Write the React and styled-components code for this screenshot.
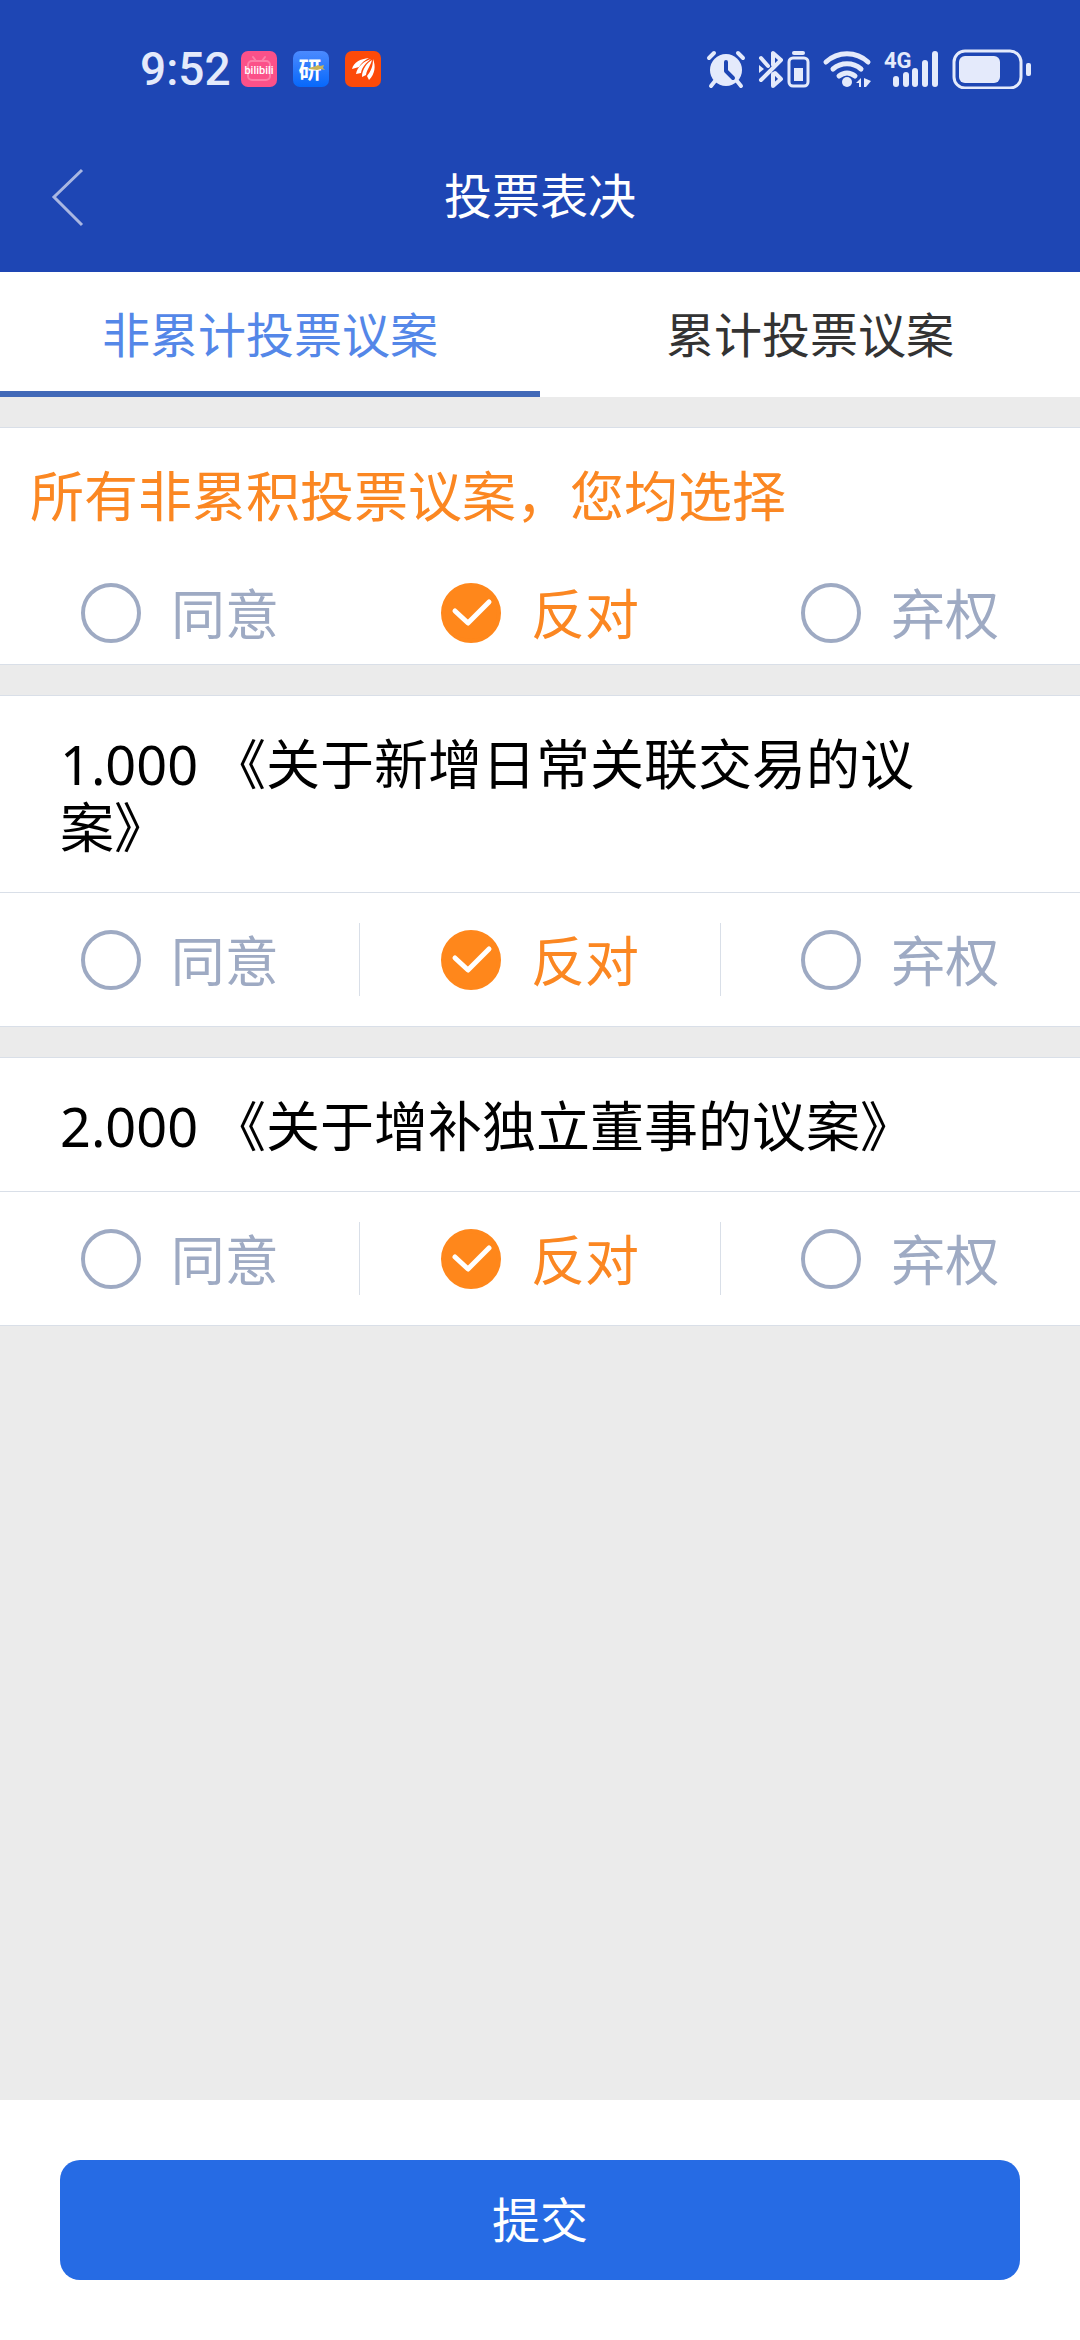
import React, { useState } from 'react'
import styled, { createGlobalStyle } from 'styled-components'

const GlobalStyle = createGlobalStyle`
  * {
    box-sizing: border-box;
  }

  body {
    margin: 0;
    background-color: #ebebeb;
    font-family: "Noto Sans", "Noto Sans CJK SC", sans-serif;
    text-spacing-trim: space-all;
  }

  button, input {
    font-family: inherit;
  }
`

const Page = styled.div`
  min-height: 100vh;
  display: flex;
  flex-direction: column;
`

const Header = styled.header`
  background-color: #1e46b4;
  color: #fff;
`

const StatusBar = styled.div`
  display: flex;
  justify-content: space-between;
  padding: 49px 49px 35px 140px;
  color: #e4eafb;
`

const StatusGroup = styled.div`
  height: 40px;
  display: flex;
  align-items: center;
  gap: ${props => props.$gap}px;
`

const Clock = styled.span`
  font-family: Roboto, sans-serif;
  font-size: 46px;
  font-weight: 500;
  line-height: 40px;
  margin-right: -6px;
`

const TitleBar = styled.div`
  height: 148px;
  display: grid;
  grid-template-columns: 140px 1fr 140px;
  align-items: center;
`

const BackButton = styled.button`
  height: 100%;
  padding: 0 0 0 50px;
  border: none;
  background: none;
  display: flex;
  align-items: center;
  cursor: pointer;
`

const Title = styled.h1`
  margin: 0;
  padding-bottom: 4px;
  font-size: 48px;
  font-weight: 400;
  line-height: 60px;
  text-align: center;
`

const Tabs = styled.nav`
  display: flex;
  background-color: #fff;
`

const Tab = styled.button`
  flex: 1;
  height: 125px;
  padding: 0;
  border: none;
  border-top: 6px solid transparent;
  border-bottom: 6px solid ${props => props.$active ? '#4169b8' : 'transparent'};
  background: none;
  color: ${props => props.$active ? '#5487e8' : '#333'};
  font-size: 48px;
  line-height: 60px;
  cursor: pointer;
`

const List = styled.main`
  flex-grow: 1;
  padding: 30px 0;
  display: flex;
  flex-direction: column;
  gap: 30px;
`

const Card = styled.section`
  background-color: #fff;
  border-top: 1px solid #d9dfe8;
  border-bottom: 1px solid #d9dfe8;
`

const AllTitle = styled.h2`
  margin: 0;
  padding: 37px 30px 48px;
  color: #fb8722;
  font-size: 54px;
  font-weight: 400;
  line-height: 63px;
`

const ProposalTitle = styled.h2`
  margin: 0;
  padding: 37px 60px 33px;
  border-bottom: 1px solid #d9dfe8;
  color: #000;
  font-size: 54px;
  font-weight: 400;
  line-height: 63px;
`

const Options = styled.div`
  display: flex;
  padding: ${props => props.$compact ? '0 0 15px' : '30px 0'};
`

const Option = styled.label`
  flex: 1;
  height: 73px;
  display: flex;
  align-items: center;
  justify-content: center;
  gap: 30px;
  color: ${props => props.$checked ? '#fb8722' : '#9eaac3'};
  cursor: pointer;

  &:not(:last-child) {
    border-right: ${props => props.$divided ? '1px solid #d9dfe8' : 'none'};
  }
`

const OptionText = styled.span`
  padding-top: 3px;
  font-size: 54px;
  line-height: 63px;
`

const RadioBox = styled.span`
  display: grid;

  > * {
    grid-area: 1 / 1;
  }
`

const Radio = styled.input`
  appearance: none;
  width: 60px;
  height: 60px;
  margin: 0;
  border: 4px solid #9eaac3;
  border-radius: 50%;
  background-color: #fff;
  cursor: pointer;

  &:checked {
    border-color: #ff871b;
    background-color: #ff871b;
  }
`

const Tick = styled.svg`
  z-index: 1;
  pointer-events: none;
`

const Footer = styled.footer`
  padding: 60px;
  background-color: #fff;
`

const SubmitButton = styled.button`
  width: 100%;
  height: 120px;
  border: none;
  border-radius: 20px;
  background-color: #266be4;
  color: #fff;
  font-size: 48px;
  line-height: 60px;
  cursor: pointer;
`

const BiliIcon = () => (
  <svg width="36" height="36" viewBox="0 0 36 36">
    <rect width="36" height="36" rx="7" fill="#fb5189" />
    <g fill="none" stroke="#fd7fa8" strokeWidth="2" strokeLinecap="round">
      <rect x="7" y="10" width="22" height="19" rx="4" />
      <path d="M12 6l3 4M24 6l-3 4" />
    </g>
    <text x="18" y="23" textAnchor="middle" fontFamily="Roboto, sans-serif" fontWeight="500" fontSize="11" fill="#fff">bilibili</text>
  </svg>
)

const YanIcon = () => (
  <svg width="36" height="36" viewBox="0 0 36 36">
    <defs>
      <linearGradient id="yan" x1="0" y1="0" x2="0" y2="1">
        <stop offset="0" stopColor="#4b8aff" />
        <stop offset="1" stopColor="#0668fb" />
      </linearGradient>
    </defs>
    <rect width="36" height="36" rx="7" fill="url(#yan)" />
    <text x="17" y="27" textAnchor="middle" fontFamily="Noto Sans CJK SC, sans-serif" fontWeight="700" fontSize="23" fill="#fff">研</text>
    <path d="M16 17l7-2 2-1 2 1 4-1-1 3 2 2-4-1-4 1-8-1z" fill="#c9b45a" />
  </svg>
)

const WingIcon = () => (
  <svg width="36" height="36" viewBox="0 0 36 36">
    <rect width="36" height="36" rx="7" fill="#fd4a09" />
    <g fill="#fff">
      <path d="M24 7C15 8 9 11 7 18l7-2c2-4 6-7 10-9z" />
      <path d="M26 8c-7 2-14 8-15 15l5-1c1-6 5-10 10-14z" />
      <path d="M27 9c-5 3-10 9-10 17l4-2c1-6 5-10 6-15z" />
      <path d="M28 8c3 7 2 15-4 21l-2-4c4-5 6-10 6-17z" />
    </g>
  </svg>
)

const AlarmIcon = () => (
  <svg width="40" height="40" viewBox="0 0 40 40" fill="none" stroke="currentColor" strokeLinecap="round">
    <path d="M3 9l5-5M37 9l-5-5" strokeWidth="4" />
    <path d="M9 32l-4 5M31 32l4 5" strokeWidth="4" />
    <circle cx="20" cy="21" r="16" fill="currentColor" stroke="none" />
    <path d="M20 13v9l7 7" stroke="#1e46b4" strokeWidth="4" strokeLinejoin="round" />
  </svg>
)

const BluetoothIcon = () => (
  <svg width="52" height="40" viewBox="0 0 52 40" fill="none" stroke="currentColor" strokeLinecap="round" strokeLinejoin="round">
    <path d="M3 31l20-20-8-7v12M3 9l7 8M15 25v12l8-7-6-6" strokeWidth="4" />
    <path d="M1 16l5 4-5 4z" fill="currentColor" stroke="none" />
    <path d="M36 4h9" strokeWidth="4" />
    <rect x="31" y="9" width="19" height="28" rx="4" strokeWidth="3" />
    <rect x="36" y="19" width="9" height="13" fill="currentColor" stroke="none" />
  </svg>
)

const WifiIcon = () => (
  <svg width="50" height="40" viewBox="0 0 50 40" fill="none" stroke="currentColor" strokeWidth="5" strokeLinecap="round">
    <path d="M4 13c12-11 30-11 42 0" />
    <path d="M11 20c8-7 20-7 28 0" />
    <path d="M17 27c5-4 11-4 16 0" />
    <g fill="currentColor" stroke="none">
      <circle cx="25" cy="33" r="5" />
      <path d="M34 34l5-5v9h-2v-4zM42 29l7 3-5 6h-2z" />
    </g>
  </svg>
)

const SignalIcon = () => (
  <svg width="56" height="40" viewBox="0 0 56 40" fill="currentColor">
    <text x="0" y="19" fontFamily="Roboto, sans-serif" fontWeight="700" fontSize="22">4G</text>
    <rect x="9" y="27" width="6" height="11" rx="3" />
    <rect x="19" y="23" width="6" height="15" rx="3" />
    <rect x="28" y="19" width="6" height="19" rx="3" />
    <rect x="38" y="11" width="6" height="27" rx="3" />
    <rect x="48" y="2" width="6" height="36" rx="3" />
  </svg>
)

const BatteryIcon = () => (
  <svg width="79" height="40" viewBox="0 0 79 40" fill="currentColor">
    <rect x="2" y="2" width="67" height="37" rx="11" fill="none" stroke="currentColor" strokeWidth="3" />
    <rect x="7" y="7" width="41" height="27" rx="6" />
    <rect x="74" y="14" width="5" height="13" rx="2" />
  </svg>
)

const choices = ['同意', '反对', '弃权']

const proposals = [
  { no: '1.000', name: '《关于新增日常关联交易的议案》' },
  { no: '2.000', name: '《关于增补独立董事的议案》' },
]

const VoteOptions = ({ name, value, onChange, compact }) => {
  return (
    <Options role="radiogroup" $compact={compact}>
      {choices.map(choice => (
        <Option key={choice} $checked={value === choice} $divided={!compact}>
          <RadioBox>
            <Radio
              type="radio"
              name={name}
              value={choice}
              checked={value === choice}
              onChange={() => onChange(choice)}
            />
            {value === choice &&
              <Tick width="60" height="60" viewBox="0 0 60 60" fill="none" stroke="#fff" strokeWidth="5">
                <path d="M14 28l13 12 21-21" strokeLinecap="round" strokeLinejoin="round" />
              </Tick>
            }
          </RadioBox>
          <OptionText>{choice}</OptionText>
        </Option>
      ))}
    </Options>
  )
}

const App = () => {
  const [tab, setTab] = useState(0)
  const [all, setAll] = useState('反对')
  const [votes, setVotes] = useState(['反对', '反对'])

  const handleAll = (choice) => {
    setAll(choice)
    setVotes(proposals.map(() => choice))
  }

  const handleVote = (index, choice) => {
    const newVotes = votes.map((vote, i) => i === index ? choice : vote)
    setVotes(newVotes)
    setAll(newVotes.every(vote => vote === choice) ? choice : '')
  }

  return (
    <Page>
      <GlobalStyle />
      <Header>
        <StatusBar>
          <StatusGroup $gap={16}>
            <Clock>9:52</Clock>
            <BiliIcon />
            <YanIcon />
            <WingIcon />
          </StatusGroup>
          <StatusGroup $gap={12}>
            <AlarmIcon />
            <BluetoothIcon />
            <WifiIcon />
            <SignalIcon />
            <BatteryIcon />
          </StatusGroup>
        </StatusBar>
        <TitleBar>
          <BackButton aria-label="返回">
            <svg width="36" height="60" viewBox="0 0 36 60" fill="none" stroke="#a9b7e2" strokeWidth="3">
              <path d="M32 2L4 29l28 28" />
            </svg>
          </BackButton>
          <Title>投票表决</Title>
        </TitleBar>
      </Header>
      <Tabs>
        {['非累计投票议案', '累计投票议案'].map((label, i) => (
          <Tab key={label} $active={tab === i} onClick={() => setTab(i)}>{label}</Tab>
        ))}
      </Tabs>
      <List>
        <Card>
          <AllTitle>所有非累积投票议案，您均选择</AllTitle>
          <VoteOptions name="all" value={all} onChange={handleAll} compact />
        </Card>
        {proposals.map((proposal, i) => (
          <Card key={proposal.no}>
            <ProposalTitle>{`${proposal.no} ${proposal.name}`}</ProposalTitle>
            <VoteOptions
              name={proposal.no}
              value={votes[i]}
              onChange={(choice) => handleVote(i, choice)}
            />
          </Card>
        ))}
      </List>
      <Footer>
        <SubmitButton>提交</SubmitButton>
      </Footer>
    </Page>
  )
}

export default App
